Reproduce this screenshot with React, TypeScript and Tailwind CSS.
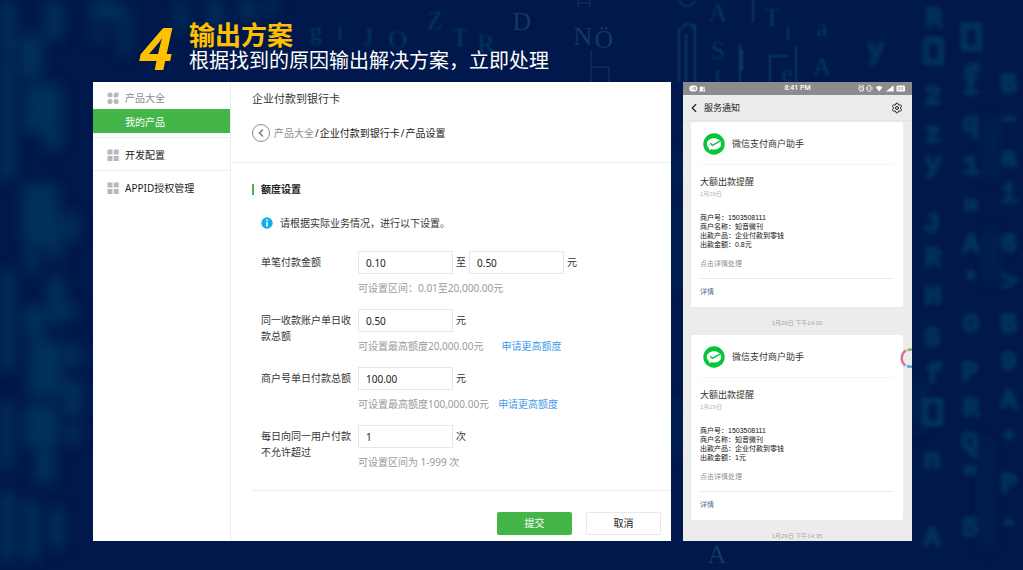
import React from 'react'
import { ChevronLeft, Settings } from 'lucide-react'

type Glyph = [string, number, number]

const farGlyphs: Glyph[] = [
    ['2', 933, 104], ['z', 933, 142], ['y', 933, 172], ['J', 932, 232],
    ['R', 933, 266], ['H', 933, 304], ['S', 932, 346], ['f', 934, 382],
    ['n', 932, 468], ['A', 932, 545], ['I', 971, 94], ['q', 971, 132], ['1', 971, 174],
    ['»', 971, 212], ['A', 971, 252], ['•', 971, 284], ['O', 971, 332], ['P', 970, 380],
    ['R', 971, 416], ['Q', 970, 450], ['"', 970, 486], ['5', 970, 536],
    ['B', 1009, 92], ['–', 1009, 126], ['a', 1009, 166], ['i', 1009, 202], ['6', 1009, 252],
    ['>', 1009, 290], ['B', 1009, 332], ['9', 1009, 370], ['A', 1009, 408], ['•', 1009, 444],
    ['P', 1009, 492], ['-', 1009, 530], ['R', 934, 26], ['f', 972, 84], ['y', 876, 58]
]

const midGlyphs: Glyph[] = [
    ['A', 718, 21], ['S', 718, 59], ['t', 718, 84], ['i', 788, 40], ['e', 787, 82],
    ['A', 822, 75], ['a', 822, 36], ['T', 772, 26], ['Z', 435, 29], ['T', 460, 46],
    ['R', 486, 52], ['O', 398, 48], ['J', 368, 46], ['i', 340, 40], ['g', 316, 40]
]

const nearGlyphs: Glyph[] = [
    ['N', 583, 45], ['Ö', 604, 48], ['D', 522, 30], ['A', 717, 563]
]

// x, y, width, height
const haze: number[][] = [
    [0, 60, 14, 120], [24, 84, 22, 50], [46, 84, 16, 66], [22, 184, 36, 60], [26, 240, 12, 34],
    [48, 210, 14, 50], [48, 276, 16, 48], [0, 270, 14, 100], [24, 306, 20, 32], [28, 340, 34, 56],
    [24, 404, 34, 44], [36, 450, 18, 34], [0, 400, 12, 70], [66, 344, 16, 22], [64, 380, 18, 36],
    [66, 424, 14, 20], [66, 212, 12, 30], [66, 304, 12, 16], [24, 500, 14, 60], [50, 508, 14, 40],
    [0, 490, 14, 70], [0, 0, 14, 56], [46, 0, 16, 40], [20, 34, 22, 44], [94, 28, 12, 14],
    [90, 0, 28, 20], [120, 6, 10, 50], [176, 0, 10, 34], [208, 0, 14, 26], [240, 0, 16, 20],
    [264, 0, 14, 14], [674, 150, 5, 40], [674, 200, 4, 90], [674, 400, 5, 60],
    [916, 380, 6, 50], [988, 120, 6, 60], [988, 230, 6, 50], [984, 440, 4, 110]
]

const menu = ['开发配置', 'APPID授权管理']

const limits = [
    {
        id: 'daily-payee', label: '同一收款账户单日收款总额', value: '0.50', unit: '元',
        hint: '可设置最高额度20,000.00元', linkClass: 'ml-[18px]'
    },
    {
        id: 'daily-merchant', label: '商户号单日付款总额', value: '100.00', unit: '元',
        hint: '可设置最高额度100,000.00元', linkClass: 'ml-[9px]'
    },
    {
        id: 'daily-count', label: '每日向同一用户付款不允许超过', value: '1', unit: '次',
        hint: '可设置区间为 1-999 次', linkClass: ''
    }
]

const notices = [
    { amount: '0.8元', time: '1月29日 下午14:00' },
    { amount: '1元', time: '1月29日 下午14:35' }
]

function CodeRain() {
    const draw = (glyphs: Glyph[]) => glyphs.map(([char, x, y], i) => (
        <text key={i} x={x} y={y} textAnchor="middle">{char}</text>
    ))

    return (
        <svg
            aria-hidden="true"
            className="absolute inset-0 w-full h-full pointer-events-none select-none"
            viewBox="0 0 1023 570"
            preserveAspectRatio="xMidYMid slice"
        >
            <defs>
                <filter id="blur-haze" x="-10%" y="-10%" width="120%" height="120%"><feGaussianBlur stdDeviation="7" /></filter>
                <filter id="blur-far"><feGaussianBlur stdDeviation="2" /></filter>
                <filter id="blur-mid"><feGaussianBlur stdDeviation="1" /></filter>
            </defs>
            <g fill="#03385f" opacity="0.8" filter="url(#blur-haze)">
                {haze.map(([x, y, w, h], i) => <rect key={i} x={x} y={y} width={w} height={h} rx="5" />)}
            </g>
            <g
                className="font-['Liberation_Mono',monospace] font-bold text-[28px]"
                fill="#023459"
                stroke="#023459"
                strokeWidth="2"
                filter="url(#blur-far)"
            >
                {draw(farGlyphs)}
                <g fill="none" strokeWidth="6">
                    <rect x="925" y="401" width="15" height="22" />
                    <rect x="926" y="40" width="15" height="22" />
                    <rect x="964" y="26" width="15" height="22" />
                </g>
            </g>
            <g className="font-['Liberation_Serif',serif] text-[26px]" fill="#07466a" opacity="0.75" filter="url(#blur-mid)">
                {draw(midGlyphs)}
                <path d="M679 28v54M686 34v48M695 24v58M740 44v38M753 0v22M796 46v36M742 50v20" stroke="#07466a" strokeWidth="2" />
                <path d="M680 0a7 6 0 0 0 14 0M682 30a6 6 0 1 1 12 0M770 82V56h18" fill="none" stroke="#07466a" strokeWidth="2" />
            </g>
            <g className="font-['Liberation_Serif',serif] text-[26px]" fill="#1f4f72" opacity="0.6">
                {draw(nearGlyphs)}
                <path d="M591 82V67h18v15M591 50v17M578 0v7M590 0v7M578 3h12" fill="none" stroke="#1f4f72" />
            </g>
        </svg>
    )
}

function GridIcon({ round = false }: { round?: boolean }) {
    return (
        <svg className="w-3 h-3 shrink-0" viewBox="0 0 12 12" fill="#b8b8b8" aria-hidden="true">
            {round ? (
                <>
                    <rect x="0.5" y="0.5" width="5" height="5" rx="2" />
                    <path d="M6.7 5.5V3a2.5 2.5 0 0 1 2.6-2.6h2.3V3A2.5 2.5 0 0 1 9 5.5z" />
                    <rect x="0.5" y="7" width="5" height="5" rx="2" />
                    <rect x="6.7" y="7" width="5" height="5" rx="2" />
                </>
            ) : (
                <path d="M0.5 0.5h5v5h-5zM6.7 0.5h5v5h-5zM0.5 7h5v5h-5zM6.7 7h5v5h-5z" />
            )}
        </svg>
    )
}

function AmountInput({ id, value, label }: { id: string, value: string, label?: string }) {
    return (
        <input
            id={id}
            aria-label={label}
            defaultValue={value}
            className="w-[95px] h-[23px] border border-[#e7e7eb] bg-white px-[7px] text-[10px] leading-4 text-[#222] outline-none"
        />
    )
}

function FormRow({ id, label, hint, children }: { id: string, label: string, hint: React.ReactNode, children: React.ReactNode }) {
    return (
        <div className="flex items-start mb-[13px]">
            <label htmlFor={id} className="w-[90px] mr-[7px] pt-[3px] shrink-0 leading-4 text-[#353535]">{label}</label>
            <div>
                <div className="flex items-center gap-[3px] text-[#353535]">{children}</div>
                <p className="mt-[6px] leading-4 text-[#9a9a9a] whitespace-nowrap">{hint}</p>
            </div>
        </div>
    )
}

function StatusBar() {
    return (
        <div className="h-[13px] bg-[#8c8c8c] grid grid-cols-3 items-center px-[6px] text-white">
            <svg className="w-[18px] h-[9px]" viewBox="0 0 18 9" aria-hidden="true">
                <rect x="0.3" y="1.5" width="8" height="6" rx="3" fill="#fff" />
                <path d="M3 3.4v2.4M5 3.4h1.4v2.3H5z" fill="none" stroke="#8c8c8c" strokeWidth="0.7" />
                <path d="M10.3 7.5V6.4l1-.7a1.8 1.8 0 1 1 2.2 0l1 .7v1.1zM14.5 2.6h1v3l.6.8v1.1h-1.2z" fill="#fff" />
            </svg>
            <span className="text-center text-[7px] leading-[9px] font-medium font-['Roboto',sans-serif]">8:41 PM</span>
            <svg className="w-[48px] h-[9px] justify-self-end" viewBox="0 0 48 9" fill="none" stroke="#fff" aria-hidden="true">
                <path d="M0.8 2.2 2.3.9M5.8 2.2 4.3.9" />
                <circle cx="3.3" cy="4.8" r="2.4" />
                <path d="M3.3 3.4v1.6h1.2" strokeWidth="0.6" />
                <rect x="9.8" y="1.5" width="3" height="6" rx="1" strokeWidth="0.8" />
                <path d="M8.5 3v3M14.1 3v3" strokeWidth="0.6" />
                <path d="M18 3.4a4.6 4.6 0 0 1 6.4 0l-3.2 4z" fill="#fff" stroke="none" />
                <path d="M28 7.5 35.6 1.2v6.300z" fill="#fff" stroke="none" />
                <rect x="38.5" y="1.5" width="8.500" height="6" rx="1.2" fill="#fff" stroke="none" />
                <path d="M40.3 3.3h1.6v2.4h-1.6zM43.300 3.3h1.6v2.4h-1.600z" stroke="#8c8c8c" strokeWidth="0.5" />
            </svg>
        </div>
    )
}

function PayLogo() {
    return (
        <svg className="w-[22px] h-[22px]" viewBox="0 0 22 22" aria-hidden="true">
            <circle cx="11" cy="11" r="10.7" fill="#06c53a" />
            <path d="M11 5.2c-4.1 0-7.2 2.5-7.2 5.7 0 1.8 1 3.4 2.5 4.5l-.4 2 2.3-1.2c.9.3 1.8.4 2.8.4 4.1 0 7.2-2.5 7.2-5.7S15.1 5.2 11 5.2z" fill="#fff" />
            <path d="M7.2 10.3 9.5 12.3 16.8 8.2" fill="none" stroke="#06c53a" strokeWidth="1.4" />
        </svg>
    )
}

function NoticeCard({ amount }: { amount: string }) {
    return (
        <article className="bg-white rounded-[2px] px-[9px] pt-[11px] pb-[10px] text-[7px] text-[#333]">
            <div className="flex items-center gap-[7px] pl-[3px] pb-[9px] border-b border-[#f5f5f5]">
                <PayLogo />
                <span className="text-[9px] leading-3">微信支付商户助手</span>
            </div>
            <h3 className="mt-[11px] text-[9px] leading-3">大额出款提醒</h3>
            <p className="mt-[2px] text-[6px] leading-2 text-[#b5b5b5]">1月29日</p>
            <div className="mt-[15px] leading-[9px] text-[#111]">
                <p>商户号：1503508111</p>
                <p>商户名称：知音微刊</p>
                <p>出款产品：企业付款到零钱</p>
                <p>出款金额：{amount}</p>
            </div>
            <p className="mt-[10px] leading-[10px] text-[#8f8f8f]">点击详情处理</p>
            <a href="#" className="block mt-[9px] pt-2 border-t border-[#ebebeb] leading-[10px] text-[#576b95]">详情</a>
        </article>
    )
}

function MerchantPanel() {
    return (
        <section className="flex-1 min-w-0 flex bg-white text-[10px] text-[#353535]">
            <nav className="w-[138px] shrink-0 border-r border-[#ededed] pt-[5px] leading-4">
                <a href="#" className="flex items-center gap-[6px] h-[22px] pl-[14px] text-[#8d8d8d]">
                    <GridIcon round />
                    产品大全
                </a>
                <a href="#" className="flex items-center h-6 mb-1 pt-px pl-8 bg-[#44b549] text-white">我的产品</a>
                {menu.map((item) => (
                    <a key={item} href="#" className="flex items-center gap-[6px] h-[33px] pt-[2px] pl-[14px] border-t border-[#ededed] text-[#222]">
                        <GridIcon />
                        {item}
                    </a>
                ))}
            </nav>
            <div className="flex-1 min-w-0">
                <header className="pl-[21px] pt-[9px] pb-5 border-b border-[#ededed]">
                    <h2 className="text-[11px] leading-4">企业付款到银行卡</h2>
                    <div className="flex items-center gap-1 mt-[17px] h-[18px] leading-4">
                        <button aria-label="返回" className="w-[18px] h-[18px] shrink-0 rounded-full border border-[#8d8d8d] flex items-center justify-center text-[#777]">
                            <ChevronLeft size={12} strokeWidth={3} />
                        </button>
                        <p className="flex gap-px whitespace-nowrap text-[#222]">
                            <a href="#" className="text-[#8d8d8d]">产品大全</a>
                            <span>/</span>
                            <span>企业付款到银行卡</span>
                            <span>/</span>
                            <span>产品设置</span>
                        </p>
                    </div>
                </header>
                <form className="pl-[21px]" onSubmit={(e) => e.preventDefault()}>
                    <h3 className="flex items-center gap-[7px] mt-[18px] leading-4 font-bold text-[#222]">
                        <span className="w-[2px] h-[11px] bg-[#44b549]" />
                        额度设置
                    </h3>
                    <div className="pl-[9px]">
                        <p className="flex items-center gap-[7px] mt-[18px] mb-5 leading-4">
                            <svg className="w-3 h-3" viewBox="0 0 12 12" aria-hidden="true">
                                <circle cx="6" cy="6" r="5.7" fill="#10aeef" />
                                <path d="M5.2 2.3h1.6v1.5H5.2zM5.2 4.8h1.6v4.7H5.2z" fill="#fff" />
                            </svg>
                            请根据实际业务情况，进行以下设置。
                        </p>
                        <FormRow id="single-min" label="单笔付款金额" hint="可设置区间：0.01至20,000.00元">
                            <AmountInput id="single-min" value="0.10" />
                            至
                            <AmountInput id="single-max" value="0.50" label="单笔付款金额上限" />
                            元
                        </FormRow>
                        {limits.map((row) => (
                            <FormRow
                                key={row.id}
                                id={row.id}
                                label={row.label}
                                hint={
                                    <>
                                        {row.hint}
                                        {row.linkClass && <a href="#" className={`text-[#459ae9] ${row.linkClass}`}>申请更高额度</a>}
                                    </>
                                }
                            >
                                <AmountInput id={row.id} value={row.value} />
                                {row.unit}
                            </FormRow>
                        ))}
                    </div>
                    <div className="flex justify-end gap-[14px] mt-5 pt-[21px] pb-[6px] pr-[10px] border-t border-[#ededed]">
                        <button type="submit" className="w-[75px] h-[23px] rounded-[2px] bg-[#44b549] text-white">提交</button>
                        <button type="button" className="w-[75px] h-[23px] rounded-[2px] border border-[#e7e7eb] text-[#222]">取消</button>
                    </div>
                </form>
            </div>
        </section>
    )
}

function PhonePanel() {
    return (
        <section className="relative w-[229px] shrink-0 bg-[#ececec] overflow-hidden font-['Liberation_Sans','Noto_Sans_CJK_SC',sans-serif]">
            <StatusBar />
            <header className="flex items-center h-[26px] px-1 mb-px border-b border-[#e4e4e4] text-[#222]">
                <button aria-label="返回"><ChevronLeft size={14} /></button>
                <h2 className="flex-1 ml-[3px] text-[9px] leading-3">服务通知</h2>
                <button aria-label="设置" className="mr-[5px]"><Settings size={12} strokeWidth={2} /></button>
            </header>
            <div className="pl-2 pr-[9px]">
                {notices.map((notice, i) => (
                    <React.Fragment key={notice.time}>
                        <NoticeCard amount={notice.amount} />
                        <p className={`mt-[11px] text-center text-[6px] leading-[10px] text-[#a8a8a8] ${i === 0 ? 'mb-[7px]' : ''}`}>
                            {notice.time}
                        </p>
                    </React.Fragment>
                ))}
            </div>
            <svg className="absolute right-0 top-[266px] w-3 h-5" viewBox="0 0 12 20" fill="none" strokeWidth="2.5" aria-hidden="true">
                <path d="M6 2.500a9 9 0 0 0-.5 15" stroke="#dd6f9f" />
                <path d="M7.500 2.200A9 9 0 0 1 12 1.500" stroke="#85b56b" />
                <path d="M7 18a9 9 0 0 0 5 .5" stroke="#55a8d8" />
            </svg>
        </section>
    )
}

export default function App() {
    return (
        <main className="relative min-h-screen overflow-hidden bg-[#00184c] font-['Noto_Sans','Noto_Sans_CJK_SC',sans-serif]">
            <CodeRain />
            <div className="relative pl-[93px] pr-[111px]">
                <header className="flex items-center gap-4 h-[82px] pl-[47px] pt-3">
                    <span className="text-[60px] leading-[56px] font-bold italic text-[#ffc000]">4</span>
                    <div>
                        <h1 className="text-[26px] leading-7 font-bold text-[#ffc000]">输出方案</h1>
                        <p className="text-[20px] leading-6 text-white whitespace-nowrap">根据找到的原因输出解决方案，立即处理</p>
                    </div>
                </header>
                <div className="flex items-stretch gap-3">
                    <MerchantPanel />
                    <PhonePanel />
                </div>
            </div>
        </main>
    )
}
